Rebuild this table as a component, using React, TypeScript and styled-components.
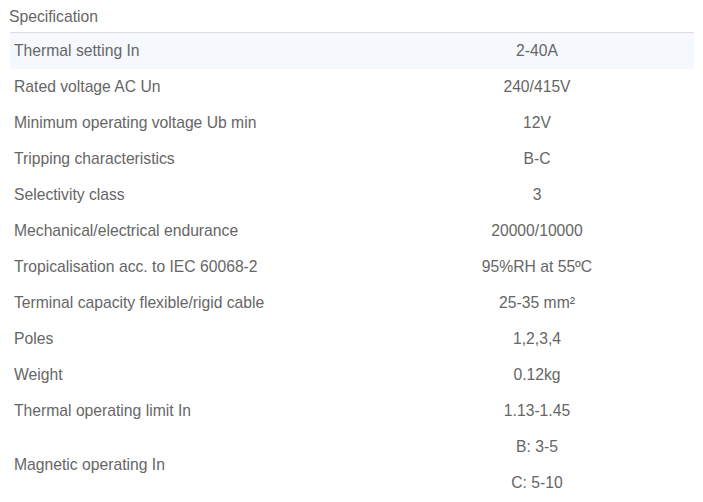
import React from 'react'
import styled, { createGlobalStyle } from 'styled-components'

const GlobalStyle = createGlobalStyle`
  body {
    margin: 0;
    background: #fff;
    font-family: "Liberation Sans", Arial, sans-serif;
    color: #666;
  }
`

type Spec = { label: string; values: React.ReactNode[] }

const specs: Spec[] = [
    { label: 'Thermal setting In', values: ['2-40A'] },
    { label: 'Rated voltage AC Un', values: ['240/415V'] },
    { label: 'Minimum operating voltage Ub min', values: ['12V'] },
    { label: 'Tripping characteristics', values: ['B-C'] },
    { label: 'Selectivity class', values: ['3'] },
    { label: 'Mechanical/electrical endurance', values: ['20000/10000'] },
    { label: 'Tropicalisation acc. to IEC 60068-2', values: ['95%RH at 55ºC'] },
    { label: 'Terminal capacity flexible/rigid cable', values: [<>25-35 mm²</>] },
    { label: 'Poles', values: ['1,2,3,4'] },
    { label: 'Weight', values: ['0.12kg'] },
    { label: 'Thermal operating limit In', values: ['1.13-1.45'] },
    { label: 'Magnetic operating In', values: ['B: 3-5', 'C: 5-10'] },
]

const App = () =>
    <Wrapper>
        <GlobalStyle />
        <Title>Specification</Title>
        <Table>
            <tbody>
            {specs.map((s, i) =>
                <Row key={s.label} $highlight={i === 0}>
                    <Label>{s.label}</Label>
                    <Value>
                        {s.values.map((v, j) => <Line key={j}>{v}</Line>)}
                    </Value>
                </Row>
            )}
            </tbody>
        </Table>
    </Wrapper>

const Wrapper = styled.div`
  padding: 0 9px 0 10px;
`
const Title = styled.h3`
  margin: 0 0 0 -1px;
  height: 32px;
  line-height: 33px;
  font-size: 15.7px;
  font-weight: normal;
  color: #666;
`
const Table = styled.table`
  width: 684px;
  border-collapse: collapse;
  border-top: 1px solid #ddd;
  font-size: 15.7px;
`
const Row = styled.tr<{ $highlight?: boolean }>`
  background: ${p => p.$highlight ? '#f5f9fe' : 'transparent'};
`
const Label = styled.td`
  width: 366px;
  padding: 0 0 0 4px;
  vertical-align: middle;
`
const Value = styled.td`
  padding: 0;
  text-align: center;
  vertical-align: middle;
`
const Line = styled.div`
  height: 36px;
  line-height: 36px;
`

export default App
